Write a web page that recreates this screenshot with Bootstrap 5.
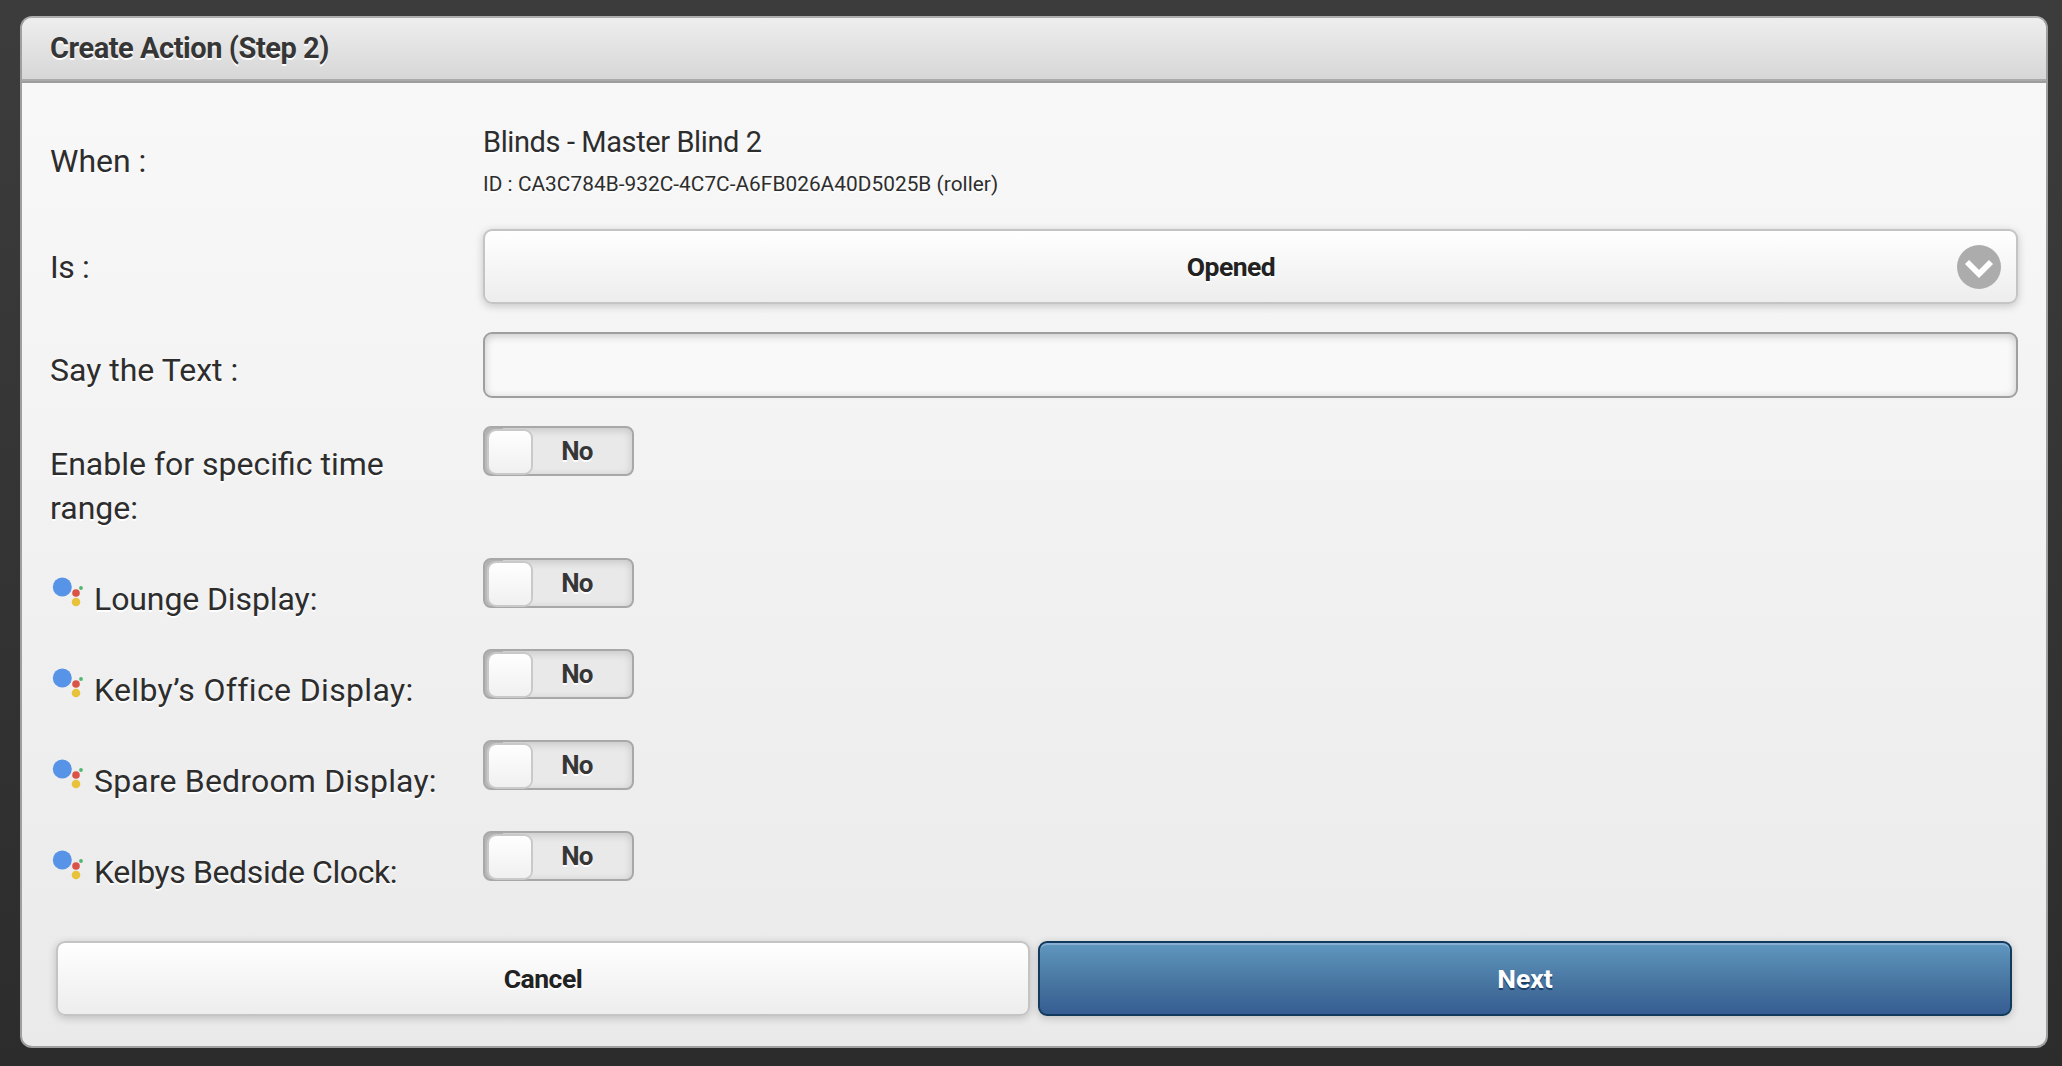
<!DOCTYPE html>
<html lang="en">
<head>
    <meta charset="UTF-8">
    <meta name="viewport" content="width=device-width, initial-scale=1.0">
    <title>Create Action</title>
    <link rel="stylesheet" href="https://cdn.jsdelivr.net/npm/bootstrap@5.3.5/dist/css/bootstrap.min.css">
    <style>
        body {
            height: 1066px;
            padding: 16px 14px 18px 20px;
            overflow: hidden;
            font-family: Roboto, "Liberation Sans", sans-serif;
            color: #2d2d2d;
            background: linear-gradient(#3c3c3c, #2c2c2c);
        }
        .panel {
            height: 1032px;
            border: 2px solid #9f9f9f;
            border-top-color: #adadad;
            border-radius: 12px;
            background: linear-gradient(#f9f9f9, #eaeaea);
            text-shadow: 0 2px 0 #fff;
        }
        .panel-top {
            height: 65px;
            padding: 0 28px;
            border-bottom: 2px solid #9d9d9d;
            box-shadow: inset 0 -2px 0 #ababab;
            border-radius: 10px 10px 0 0;
            background: linear-gradient(#eee, #d6d6d6);
        }
        .panel-top h1 {
            font-size: 29px;
            line-height: 61px;
            letter-spacing: -0.45px;
            color: #363636;
        }
        .panel-main { padding: 0 28px; }

        .line-when { height: 146px; }
        .line-is { height: 103px; }
        .line-say { height: 94px; }
        .line-range { height: 132px; }
        .line-device { height: 91px; }

        .caption {
            width: 433px;
            padding: 16px 30px 0 0;
            font-size: 32px;
            line-height: 44px;
        }
        .line-when .caption { padding-top: 56px; }
        .line-is .caption { letter-spacing: -0.4px; }
        .line-device .caption { padding: 19px 0 0; }

        .device-name {
            font-size: 29px;
            line-height: 42px;
            padding-top: 38px;
            letter-spacing: -0.4px;
        }
        .device-id {
            font-size: 20.8px;
            line-height: 42px;
            letter-spacing: 0.05px;
        }

        .ui-button {
            height: 75px;
            border: 2px solid #c4c4c4;
            border-radius: 9px;
            background: linear-gradient(#fff, #ededed);
            box-shadow: 0 2px 8px rgba(0, 0, 0, .2);
            color: #222;
            font-size: 26.5px;
            font-weight: 700;
            letter-spacing: -0.5px;
        }
        .ui-button.is-next {
            border-color: #123a5c;
            background: linear-gradient(#5f97bf, #46739f 60%, #365d92);
            box-shadow: inset 0 2px 0 #88b0d4, 0 2px 8px rgba(0, 0, 0, .2);
            color: #fff;
            text-shadow: 0 2px 0 #1c3f68;
            letter-spacing: 0;
        }
        .picker { padding: 0 15px 0 20px; }
        .btn-line { padding: 19px 6px 0; }

        .say-input, .say-input:focus {
            height: 66px;
            border: 2px solid #9f9f9f;
            border-radius: 9px;
            background: #f9f9f9;
            box-shadow: inset 0 2px 8px rgba(0, 0, 0, .2);
            font-size: 28px;
        }

        .flip {
            width: 151px;
            height: 50px;
            padding: 2px 9px 1px 4px;
            border: 2px solid #a8a8a8;
            border-radius: 8px;
            background: linear-gradient(90deg, #c6c6c6 18px, #e9e9e9 18px);
            box-shadow: inset 0 2px 8px rgba(0, 0, 0, .16);
            color: #363636;
            font-size: 26px;
            font-weight: 700;
            letter-spacing: -0.8px;
        }
        .flip-knob {
            width: 42px;
            height: 42px;
            margin-top: 1px;
            border-radius: 7px;
            background: linear-gradient(#fff, #f0f0f0);
            box-shadow: 0 0 0 2px #c9c9c9;
        }
    </style>
</head>
<body>

    <div class="panel">
        <div class="panel-top">
            <h1 class="fw-bold m-0">Create Action (Step 2)</h1>
        </div>

        <div class="panel-main">
            <div class="d-flex line-when">
                <div class="caption flex-shrink-0">When :</div>
                <div>
                    <div class="device-name">Blinds - Master Blind 2</div>
                    <div class="device-id">ID : CA3C784B-932C-4C7C-A6FB026A40D5025B (roller)</div>
                </div>
            </div>

            <div class="d-flex line-is">
                <div class="caption flex-shrink-0">Is :</div>
                <div class="ui-button picker w-100 d-flex align-items-center" role="button">
                    <span class="flex-fill text-center">Opened</span>
                    <svg width="44" height="44" viewBox="0 0 44 44">
                        <circle cx="22" cy="22" r="22" fill="#acacac"/>
                        <path d="M10 17 L22 29 L34 17" fill="none" stroke="#fff" stroke-width="5.8"/>
                    </svg>
                </div>
            </div>

            <div class="d-flex line-say">
                <label class="caption flex-shrink-0" for="sayText">Say the Text :</label>
                <input type="text" class="form-control say-input" id="sayText">
            </div>

            <div class="d-flex line-range">
                <div class="caption flex-shrink-0">Enable for specific time range:</div>
                <div class="flip d-flex" role="switch">
                    <div class="flip-knob"></div>
                    <span class="flex-fill text-center align-self-center">No</span>
                </div>
            </div>

            <div id="deviceList"></div>

            <div class="d-flex gap-2 btn-line">
                <div class="ui-button w-50 d-flex align-items-center justify-content-center" role="button">Cancel</div>
                <div class="ui-button is-next w-50 d-flex align-items-center justify-content-center" role="button">Next</div>
            </div>
        </div>
    </div>

    <script src="https://cdn.jsdelivr.net/npm/bootstrap@5.3.5/dist/js/bootstrap.bundle.min.js"></script>
    <script>
        // spacing: letter spacing of each name, in px
        const devices = [
            {name: "Lounge Display:", spacing: -0.1},
            {name: "Kelby’s Office Display:", spacing: 0.35},
            {name: "Spare Bedroom Display:", spacing: 0.17},
            {name: "Kelbys Bedside Clock:", spacing: -0.4}
        ]
        const list = document.querySelector("#deviceList")

        devices.forEach((device) => {
            list.innerHTML += `
            <div class="d-flex line-device">
                <div class="caption flex-shrink-0 d-flex">
                    <svg class="flex-shrink-0" width="44" height="44" viewBox="0 0 44 44">
                        <circle cx="12.3" cy="10" r="9.5" fill="#5793e6"/>
                        <circle cx="26" cy="16" r="3.8" fill="#da5347"/>
                        <circle cx="26" cy="25" r="4.3" fill="#e9c23c"/>
                        <circle cx="31" cy="11" r="1.9" fill="#4fb870"/>
                    </svg>
                    <span class="text-nowrap" style="letter-spacing: ${device.spacing}px">${device.name}</span>
                </div>
                <div class="flip d-flex" role="switch">
                    <div class="flip-knob"></div>
                    <span class="flex-fill text-center align-self-center">No</span>
                </div>
            </div>`
        })
    </script>

</body>
</html>
